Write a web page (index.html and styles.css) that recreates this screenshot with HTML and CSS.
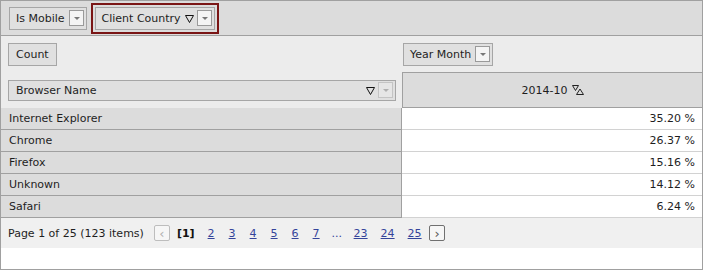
FILE: index.html
```html
<!DOCTYPE html>
<html lang="en">
<head>
    <meta charset="UTF-8">
    <title>Pivot Grid</title>
    <link rel="stylesheet" href="styles.css">
</head>
<body>
    <div class="pivot">
        <div class="filter-area">
            <div class="field">Is Mobile <span class="dd"></span></div>
            <div class="field-hl">
                <div class="field">Client Country
                    <svg class="filter-icon" width="9" height="8" viewBox="0 0 9 8"><path d="M0.5 0.5 H8.5 L4.5 7.5 Z" fill="none" stroke="#111" stroke-width="1"/></svg>
                    <span class="dd"></span>
                </div>
            </div>
        </div>

        <div class="head-row">
            <div class="left-cell"><div class="field plain">Count</div></div>
            <div class="right-cell"><div class="field">Year Month <span class="dd"></span></div></div>
        </div>

        <div class="head-row second">
            <div class="left-cell">
                <div class="field wide">Browser Name
                    <svg class="filter-icon" width="9" height="8" viewBox="0 0 9 8"><path d="M0.5 0.5 H8.5 L4.5 7.5 Z" fill="none" stroke="#111" stroke-width="1"/></svg>
                    <span class="dd disabled"></span>
                </div>
            </div>
            <div class="col-head">2014-10
                <svg class="sort-icon" width="13" height="10" viewBox="0 0 13 10"><path d="M0.5 0.5 H6.5 L3.5 5.5 Z" fill="none" stroke="#222"/><path d="M4.5 9.5 H11.5 L8 4 Z" fill="none" stroke="#222"/></svg>
            </div>
        </div>

        <div class="data-row"><div class="row-head">Internet Explorer</div><div class="cell">35.20 %</div></div>
        <div class="data-row"><div class="row-head">Chrome</div><div class="cell">26.37 %</div></div>
        <div class="data-row"><div class="row-head">Firefox</div><div class="cell">15.16 %</div></div>
        <div class="data-row"><div class="row-head">Unknown</div><div class="cell">14.12 %</div></div>
        <div class="data-row"><div class="row-head">Safari</div><div class="cell">6.24 %</div></div>

        <div class="pager">
            <span class="summary">Page 1 of 25 (123 items)</span>
            <span class="pg-btn disabled">&lsaquo;</span>
            <b class="current">[1]</b>
            <a href="#">2</a>
            <a href="#">3</a>
            <a href="#">4</a>
            <a href="#">5</a>
            <a href="#">6</a>
            <a href="#">7</a>
            <span class="dots">...</span>
            <a href="#">23</a>
            <a href="#">24</a>
            <a href="#">25</a>
            <span class="pg-btn">&rsaquo;</span>
        </div>
    </div>
</body>
</html>
```

FILE: styles.css
```css
body {
    margin: 0;
    background: #fff;
    font-family: "DejaVu Sans", Verdana, sans-serif;
    font-size: 11px;
    color: #1e1e1e;
}
.pivot {
    width: 701px;
    height: 268px;
    border: 1px solid #a0a0a0;
    background: #fff;
}
.filter-area {
    display: flex;
    align-items: center;
    gap: 4px;
    height: 34px;
    padding-left: 8px;
    background: #dcdcdc;
    border-bottom: 1px solid #a0a0a0;
}
.field {
    display: inline-flex;
    align-items: center;
    height: 21px;
    padding: 0 2px 0 6px;
    background: #e0e0e0;
    border: 1px solid #a6a6a6;
    white-space: nowrap;
}
.field.plain {
    padding: 0 7px 0 7px;
}
.field-hl {
    border: 2px solid #7a1515;
    padding: 2px;
    display: flex;
}
.dd {
    display: inline-block;
    position: relative;
    width: 13px;
    height: 14px;
    margin-left: 4px;
    border: 1px solid #9a9a9a;
    background: #f4f4f4;
}
.dd::after {
    content: "";
    position: absolute;
    left: 4px;
    top: 6px;
    border-left: 3px solid transparent;
    border-right: 3px solid transparent;
    border-top: 3px solid #777;
}
.dd.disabled {
    border-color: #c4c4c4;
    background: #e6e6e6;
}
.dd.disabled::after {
    border-top-color: #b0b0b0;
}
.filter-icon {
    margin-left: 4px;
    margin-top: 2px;
}
.filter-icon + .dd {
    margin-left: 3px;
}
.head-row {
    display: flex;
    height: 36px;
    background: #ececec;
}
.left-cell {
    width: 401px;
    display: flex;
    align-items: center;
    padding-left: 7px;
    box-sizing: border-box;
}
.right-cell {
    flex: 1;
    display: flex;
    align-items: center;
    padding-left: 1px;
}
.field.wide {
    width: 388px;
    box-sizing: border-box;
    padding-left: 7px;
}
.field.wide .filter-icon {
    margin-left: auto;
}
.col-head {
    flex: 1;
    display: flex;
    align-items: center;
    justify-content: center;
    background: #dcdcdc;
    border-top: 1px solid #a0a0a0;
    border-left: 1px solid #a0a0a0;
    border-bottom: 1px solid #a0a0a0;
    padding-left: 2px;
}
.sort-icon {
    margin-left: 5px;
    margin-top: -1px;
}
.data-row {
    display: flex;
    height: 22px;
}
.row-head {
    width: 401px;
    height: 22px;
    box-sizing: border-box;
    padding-left: 8px;
    line-height: 21px;
    background: #dcdcdc;
    border-right: 1px solid #a0a0a0;
    border-bottom: 1px solid #a0a0a0;
}
.cell {
    flex: 1;
    height: 22px;
    box-sizing: border-box;
    line-height: 21px;
    text-align: right;
    padding-right: 7px;
    border-bottom: 1px solid #d2d2d2;
}
.data-row:last-of-type .cell,
.data-row:last-of-type .row-head {
    border-bottom-color: #a0a0a0;
}
.pager {
    display: flex;
    align-items: center;
    height: 30px;
    padding-left: 7px;
    background: #f0f0f0;
    border-top: 1px solid #a0a0a0;
    margin-top: -1px;
}
.summary {
    margin-right: 10px;
}
.pg-btn {
    display: inline-flex;
    align-items: center;
    justify-content: center;
    width: 14px;
    height: 14px;
    border: 1px solid #707070;
    border-radius: 2px;
    background: #f6f6f6;
    color: #555;
    font-size: 13px;
    margin-left: 1px;
}
.pg-btn.disabled {
    border-color: #bdbdbd;
    color: #b0b0b0;
    margin-left: 0;
    margin-right: 7px;
}
.current {
    margin-right: 6px;
    color: #111;
}
.pager a {
    color: #34449a;
    margin: 0 7px;
}
.pager a:nth-last-of-type(-n+3) {
    margin: 0 6.5px;
}
.dots {
    color: #34449a;
    margin: 0 5px;
}
```
